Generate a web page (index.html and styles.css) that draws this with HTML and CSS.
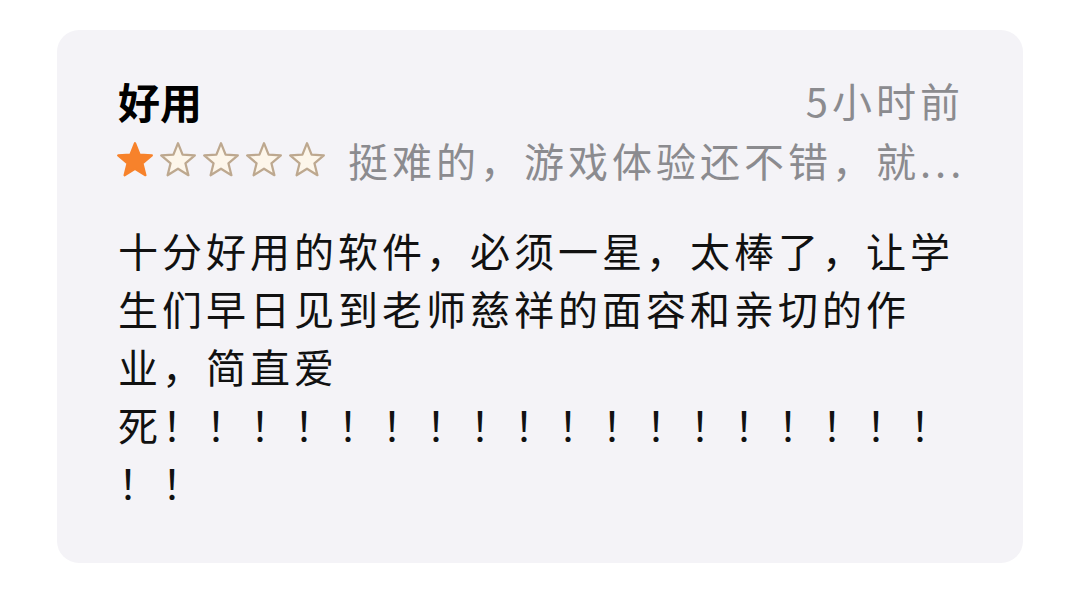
FILE: index.html
```html
<!DOCTYPE html>
<html lang="zh-CN">

<head>
    <meta charset="UTF-8">
    <meta name="viewport" content="width=device-width, initial-scale=1.0">
    <title>评论</title>
    <link rel="stylesheet" href="styles.css">
</head>

<body>
    <div class="review-card">
        <div class="review-head">
            <span class="review-title">好用</span>
            <span class="review-time">5小时前</span>
        </div>
        <div class="review-meta">
            <div class="stars">
                <svg class="star star-on" viewBox="0 0 24 24"><polygon points="12,0.8 15.06,8.39 23.22,8.95 16.95,14.21 18.94,22.15 12,17.8 5.06,22.15 7.05,14.21 0.78,8.95 8.94,8.39"/></svg>
                <svg class="star" viewBox="0 0 24 24"><polygon points="12,0.8 15.06,8.39 23.22,8.95 16.95,14.21 18.94,22.15 12,17.8 5.06,22.15 7.05,14.21 0.78,8.95 8.94,8.39"/></svg>
                <svg class="star" viewBox="0 0 24 24"><polygon points="12,0.8 15.06,8.39 23.22,8.95 16.95,14.21 18.94,22.15 12,17.8 5.06,22.15 7.05,14.21 0.78,8.95 8.94,8.39"/></svg>
                <svg class="star" viewBox="0 0 24 24"><polygon points="12,0.8 15.06,8.39 23.22,8.95 16.95,14.21 18.94,22.15 12,17.8 5.06,22.15 7.05,14.21 0.78,8.95 8.94,8.39"/></svg>
                <svg class="star" viewBox="0 0 24 24"><polygon points="12,0.8 15.06,8.39 23.22,8.95 16.95,14.21 18.94,22.15 12,17.8 5.06,22.15 7.05,14.21 0.78,8.95 8.94,8.39"/></svg>
            </div>
            <span class="review-summary">挺难的，游戏体验还不错，就...</span>
        </div>
        <p class="review-body">十分好用的软件，必须一星，太棒了，让学<br>生们早日见到老师慈祥的面容和亲切的作<br>业，简直爱<br>死！！！！！！！！！！！！！！！！！！<br>！！</p>
    </div>
</body>

</html>
```

FILE: styles.css
```css
* {
    margin: 0;
    padding: 0;
}

body {
    background: #fff;
    font-family: "Noto Sans CJK SC", "Noto Sans", sans-serif;
}

.review-card {
    width: 966px;
    height: 533px;
    box-sizing: border-box;
    margin: 30px 0 0 57px;
    padding: 45px 63px 0 61px;
    background-color: #f4f3f7;
    border-radius: 22px;
}

.review-head {
    display: flex;
    justify-content: space-between;
    align-items: center;
    height: 50px;
}

.review-title {
    font-size: 42px;
    font-weight: 700;
    color: #000;
}

.review-time {
    font-size: 40px;
    letter-spacing: 4px;
    margin-right: -4px;
    color: #8b8b8f;
}

.review-meta {
    display: flex;
    align-items: center;
    height: 48px;
    margin-top: 11px;
}

.stars {
    display: flex;
    gap: 7px;
    margin-left: -1px;
}

.star {
    width: 36px;
    height: 36px;
    overflow: visible;
    fill: #fdf6ea;
    stroke: #bda88f;
    stroke-width: 1.5;
    stroke-linejoin: round;
}

.star-on {
    fill: #f7822b;
    stroke: #f7822b;
}

.review-summary {
    margin-left: 23px;
    font-size: 40px;
    letter-spacing: 4px;
    color: #8b8b8f;
    white-space: nowrap;
}

.review-body {
    margin-top: 37px;
    font-size: 40px;
    line-height: 58px;
    letter-spacing: 4px;
    color: #111;
}
```
